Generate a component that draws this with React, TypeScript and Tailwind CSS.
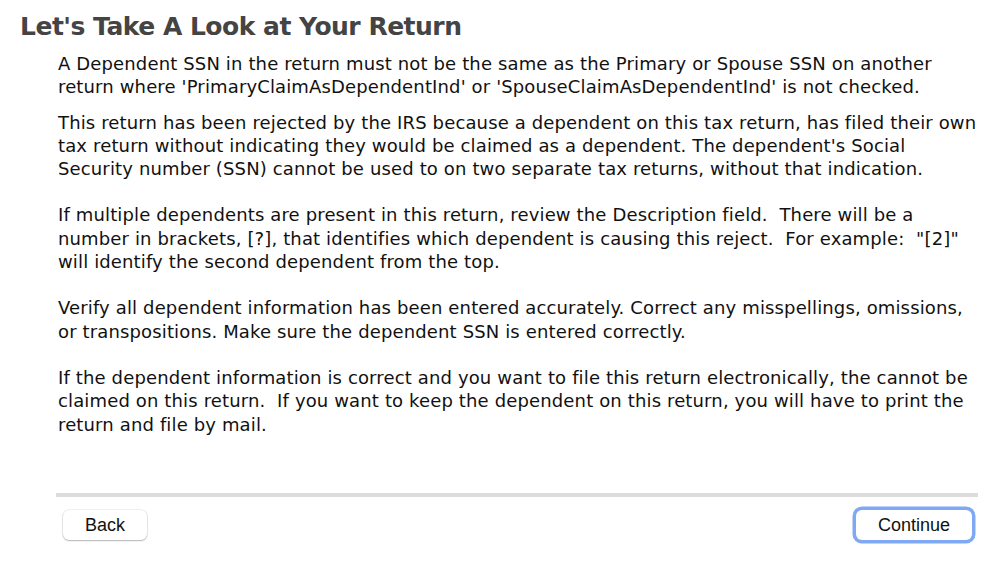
const paragraphs: string[][] = [
  [
    "A Dependent SSN in the return must not be the same as the Primary or Spouse SSN on another",
    "return where 'PrimaryClaimAsDependentInd' or 'SpouseClaimAsDependentInd' is not checked.",
  ],
  [
    "This return has been rejected by the IRS because a dependent on this tax return, has filed their own",
    "tax return without indicating they would be claimed as a dependent. The dependent's Social",
    "Security number (SSN) cannot be used to on two separate tax returns, without that indication.",
  ],
  [
    "If multiple dependents are present in this return, review the Description field.  There will be a",
    "number in brackets, [?], that identifies which dependent is causing this reject.  For example:  \"[2]\"",
    "will identify the second dependent from the top.",
  ],
  [
    "Verify all dependent information has been entered accurately. Correct any misspellings, omissions,",
    "or transpositions. Make sure the dependent SSN is entered correctly.",
  ],
  [
    "If the dependent information is correct and you want to file this return electronically, the cannot be",
    "claimed on this return.  If you want to keep the dependent on this return, you will have to print the",
    "return and file by mail.",
  ],
];

export default function App() {
  return (
    <main className="flex h-[567px] w-[999px] flex-col bg-white font-['DejaVu_Sans',sans-serif]">
      <h1 className="h-[50px] pl-5 pt-[2px] text-[25px] font-bold leading-[50px] tracking-[-0.5px] text-[#444]">
        Let&apos;s Take A Look at Your Return
      </h1>

      <div className="pt-[2px] pl-[58px] text-[18px] leading-[23.3px] tracking-[0.14px] text-[#111]">
        {paragraphs.map((lines, i) => (
          <p key={i} className={i === 0 ? "" : i === 1 ? "mt-3" : "mt-[23px]"}>
            {lines.map((line, j) => (
              <span key={j} className="block whitespace-pre">
                {line}
              </span>
            ))}
          </p>
        ))}
      </div>

      <div className="flex-1" />

      <div className="ml-[56px] mr-[21px] h-1 bg-[#dcdcdc]" />

      <div className="flex items-center justify-between pl-[63px] pr-[27px] pt-[13px] pb-[27px] font-['Liberation_Sans',sans-serif] text-[18px] text-[#111]">
        <button
          type="button"
          className="h-[30px] w-[84px] rounded-md bg-white shadow-[0_0_0_0.5px_rgba(0,0,0,0.12),0_1px_1.5px_rgba(0,0,0,0.25)]"
        >
          Back
        </button>
        <button
          type="button"
          className="h-[30px] w-[116px] rounded-md bg-white shadow-[0_0_0_3.5px_#7fa9f3,0_1px_1.5px_rgba(0,0,0,0.25)]"
        >
          Continue
        </button>
      </div>
    </main>
  );
}
